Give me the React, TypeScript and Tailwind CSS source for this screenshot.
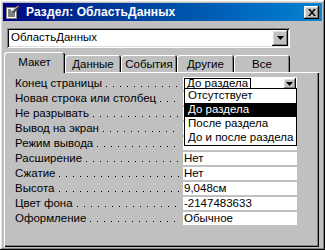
import React from "react";

const raised =
  "shadow-[inset_-1px_-1px_#000,inset_1px_1px_#fff,inset_-2px_-2px_#808080,inset_2px_2px_#dfdfdf]";
const sunken =
  "shadow-[inset_1px_1px_#808080,inset_-1px_-1px_#fff,inset_2px_2px_#000,inset_-2px_-2px_#dfdfdf]";

function DownArrow() {
  return (
    <svg width="7" height="4" viewBox="0 0 7 4">
      <path d="M0 0h7L3.5 4z" fill="#000" />
    </svg>
  );
}

function SheetIcon() {
  return (
    <svg width="16" height="16" viewBox="0 0 16 16">
      <rect x="1.5" y="3.5" width="10" height="11" fill="#fff" stroke="#808080" />
      <path d="M3 6h3M3 8h7M3 10h7M3 12h7" stroke="#000" strokeWidth="1" />
      <path d="M7 7l6-6 2 2-6 6z" fill="#404040" />
      <path d="M8 7l5-5" stroke="#c0c0c0" />
    </svg>
  );
}

const rows: { label: string; value?: string }[] = [
  { label: "Конец страницы" },
  { label: "Новая строка или столбец" },
  { label: "Не разрывать" },
  { label: "Вывод на экран" },
  { label: "Режим вывода" },
  { label: "Расширение", value: "Нет" },
  { label: "Сжатие", value: "Нет" },
  { label: "Высота", value: "9,048см" },
  { label: "Цвет фона", value: "-2147483633" },
  { label: "Оформление", value: "Обычное" },
];

export default function App() {
  return (
    <div
      className={`w-[325px] h-[250px] bg-[#c0c0c0] p-[3px] flex flex-col text-[11.5px] leading-none text-black font-['Liberation_Sans',Arial,sans-serif] ${raised}`}
    >
      {/* Title bar */}
      <div className="h-[18px] flex items-center bg-gradient-to-r from-[#000080] to-[#1084d0] pl-[2px] pr-[3px]">
        <SheetIcon />
        <span className="ml-[5px] text-white font-bold text-[12px] tracking-[0.1px] whitespace-nowrap">
          Раздел: ОбластьДанных
        </span>
        <div className="flex-1" />
        <div
          className={`w-[15px] h-[13px] bg-[#c0c0c0] flex items-center justify-center ${raised}`}
        >
          <svg width="8" height="7" viewBox="0 0 8 7">
            <path d="M0 0h2l2 2.5L6 0h2L5 3.5 8 7H6L4 4.5 2 7H0l3-3.5z" fill="#000" />
          </svg>
        </div>
      </div>

      {/* Object combo */}
      <div
        className={`mt-[7px] ml-[4px] w-[283px] h-[20px] bg-white flex items-center pl-[4px] pr-[2px] ${sunken}`}
      >
        <span className="flex-1 whitespace-nowrap">ОбластьДанных</span>
        <div
          className={`w-[16px] h-[16px] bg-[#c0c0c0] flex items-center justify-center ${raised}`}
        >
          <DownArrow />
        </div>
      </div>

      {/* Tabs */}
      <div className="mt-[4px] ml-[1px] h-[20px] flex items-end relative z-10">
        <div className="w-[61px] h-[21px] -mb-px bg-[#c0c0c0] rounded-t-[3px] shadow-[inset_1px_1px_#fff,inset_-1px_0_#000,inset_-2px_0_#808080] flex items-start justify-center pt-[5px] whitespace-nowrap">
          Макет
        </div>
        {[
          ["Данные", "w-[56px]"],
          ["События", "w-[56px]"],
          ["Другие", "w-[57px]"],
          ["Все", "w-[56px]"],
        ].map(([t, w]) => (
          <div
            key={t}
            className={`${w} h-[17px] bg-[#c0c0c0] rounded-t-[3px] shadow-[inset_1px_1px_#fff,inset_-1px_0_#000,inset_-2px_0_#808080] flex items-start justify-center pt-[4px] whitespace-nowrap`}
          >
            {t}
          </div>
        ))}
      </div>

      {/* Panel */}
      <div className="ml-[1px] w-[315px] h-[175px] relative shadow-[inset_1px_1px_#fff,inset_-1px_-1px_#000,inset_-2px_-2px_#808080] pt-[4px] pl-[11px]">
        {rows.map((r, i) => (
          <div key={r.label} className="h-[15px] flex items-center">
            <div className="w-[168px] h-full flex items-center whitespace-nowrap">
              <span className="shrink-0">{r.label}</span>
              <div className="flex-1 h-[1px] ml-[4px] mr-[3px] self-end mb-[4px] bg-[repeating-linear-gradient(to_right,#000_0_1px,transparent_1px_7px)]" />
            </div>
            <div className="w-[114px] h-[13px] bg-white flex items-center whitespace-nowrap">
              {i === 0 ? (
                <>
                  <span className="ml-[1px] h-[12px] px-[2px] border border-black flex items-center">
                    До раздела
                  </span>
                  <div className="flex-1" />
                  <div
                    className={`w-[13px] h-[11px] mr-[1px] bg-[#c0c0c0] flex items-center justify-center ${raised}`}
                  >
                    <DownArrow />
                  </div>
                </>
              ) : (
                <span className="pl-[1px]">{r.value ?? ""}</span>
              )}
            </div>
          </div>
        ))}

        {/* Dropdown list */}
        <div className="absolute left-[180px] top-[16px] w-[113px] border border-black bg-white">
          {["Отсутствует", "До раздела", "После раздела", "До и после раздела"].map(
            (t, i) => (
              <div
                key={t}
                className={`h-[14px] flex items-center pl-[3px] whitespace-nowrap ${
                  i === 1 ? "bg-black text-white" : ""
                }`}
              >
                {t}
              </div>
            )
          )}
        </div>
      </div>
    </div>
  );
}
